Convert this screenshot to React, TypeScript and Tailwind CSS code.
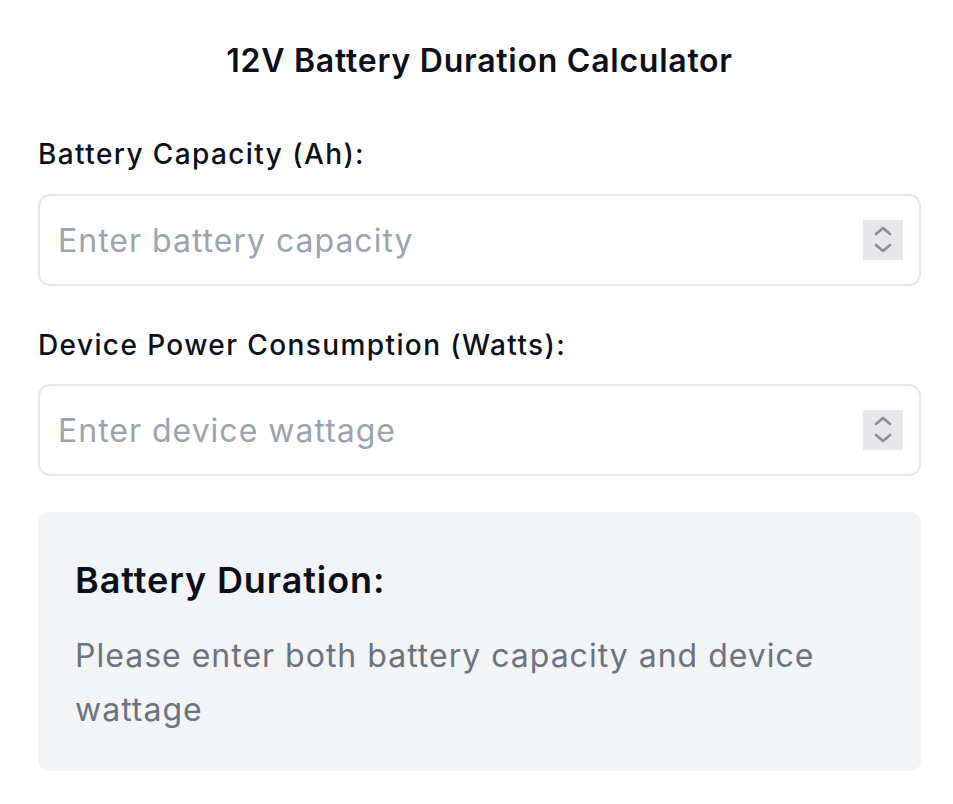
import { useState } from "react";

function Spinner() {
  return (
    <div className="pointer-events-none absolute right-[18px] top-1/2 flex h-[40px] w-[40px] -translate-y-1/2 items-center justify-center bg-[#e6e6eb]">
      <svg width="40" height="40" viewBox="0 0 40 40" fill="none">
        <path d="M13 14 L20 8 L27 14" stroke="#8c8c92" strokeWidth="2.6" strokeLinecap="round" strokeLinejoin="round" />
        <path d="M13 25 L20 31 L27 25" stroke="#8c8c92" strokeWidth="2.6" strokeLinecap="round" strokeLinejoin="round" />
      </svg>
    </div>
  );
}

export default function App() {
  const [capacity, setCapacity] = useState("");
  const [watts, setWatts] = useState("");

  const cap = parseFloat(capacity);
  const w = parseFloat(watts);
  let result = "Please enter both battery capacity and device wattage";
  if (cap > 0 && w > 0) {
    const hours = (cap * 12) / w;
    result = `${hours.toFixed(2)} hours`;
  }

  return (
    <div className="min-h-screen bg-white font-['Inter',sans-serif] text-[#0b0f1a]">
      <div className="pl-[38px] pr-[32px] pt-[37px]">
        <h1 className="mb-[49px] text-center text-[32px] font-semibold leading-[48px] tracking-[0.75px]">
          12V Battery Duration Calculator
        </h1>

        <label className="mb-[20px] block text-[28px] font-medium leading-[40px] tracking-[1.4px]">
          Battery Capacity (Ah):
        </label>
        <div className="relative mb-[39px]">
          <input
            type="text"
            inputMode="decimal"
            value={capacity}
            onChange={(e) => setCapacity(e.target.value)}
            placeholder="Enter battery capacity"
            className="h-[92px] w-full rounded-[12px] border-2 border-[#e5e7eb] px-[18px] text-[32px] tracking-[1px] text-[#111827] outline-none placeholder:text-[#9ca3af]"
          />
          <Spinner />
        </div>

        <label className="mb-[19px] block text-[28px] font-medium leading-[40px] tracking-[1.4px]">
          Device Power Consumption (Watts):
        </label>
        <div className="relative mb-[36px]">
          <input
            type="text"
            inputMode="decimal"
            value={watts}
            onChange={(e) => setWatts(e.target.value)}
            placeholder="Enter device wattage"
            className="h-[92px] w-full rounded-[12px] border-2 border-[#e5e7eb] px-[18px] text-[32px] tracking-[1px] text-[#111827] outline-none placeholder:text-[#9ca3af]"
          />
          <Spinner />
        </div>

        <div className="rounded-[10px] bg-[#f3f4f6] px-[37px] pb-[34px] pt-[40px]">
          <h2 className="mb-[21px] text-[36px] font-semibold leading-[56px] tracking-[0.9px]">Battery Duration:</h2>
          <p className="text-[32px] leading-[54px] tracking-[1px] text-[#6b7280]">{result}</p>
        </div>
      </div>
    </div>
  );
}
